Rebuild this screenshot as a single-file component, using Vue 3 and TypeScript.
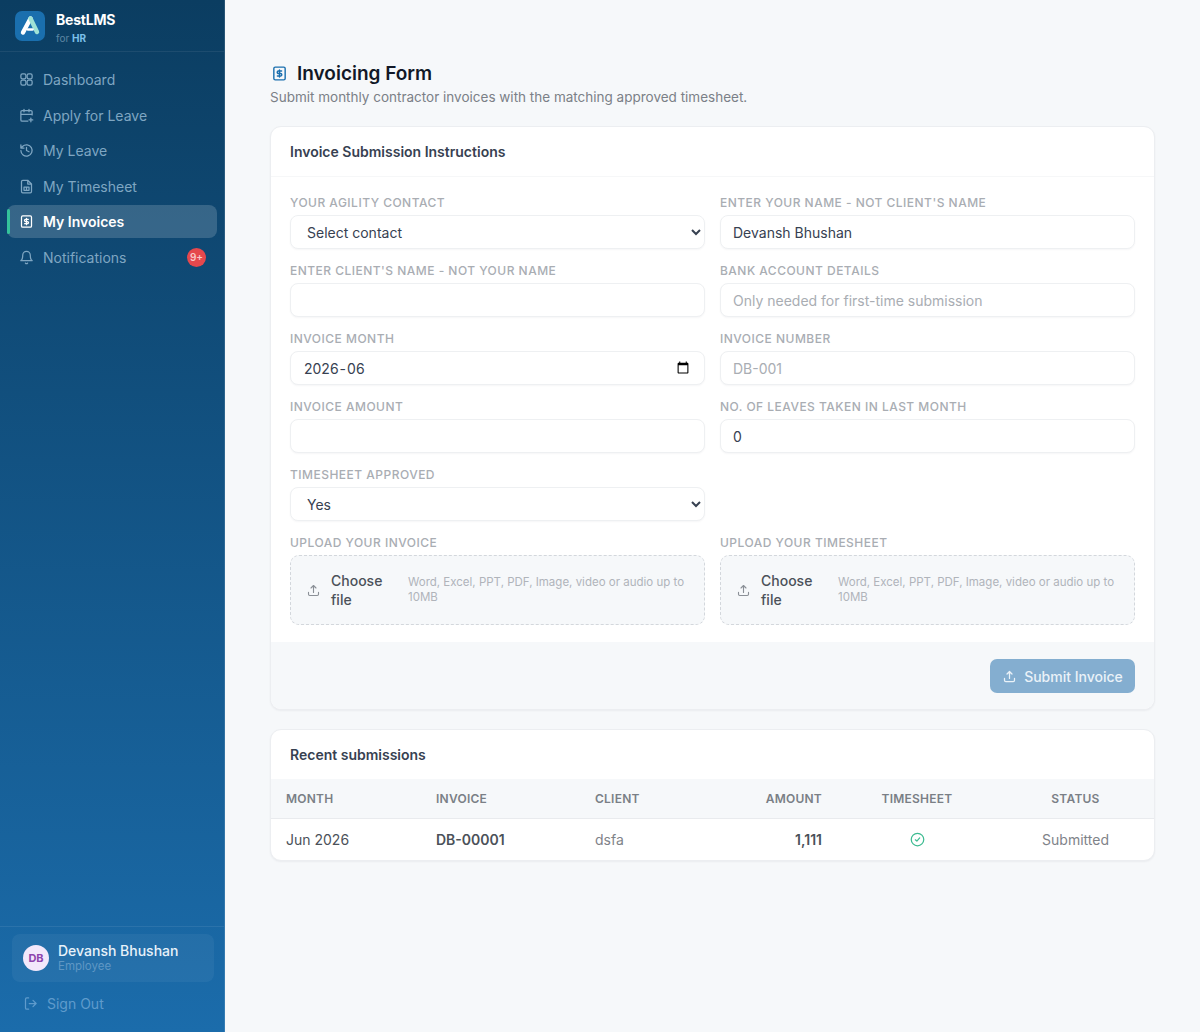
<template>
  <div class="layout">
    <aside class="sidebar">
      <div class="brand">
        <div class="logo">
          <svg viewBox="0 0 30 30" width="30" height="30">
            <path d="M15.5 7.5 8 21.5" stroke="#fff" stroke-width="4.4" stroke-linecap="round" fill="none" />
            <path d="M15.5 7.5 22 21" stroke="#9fe3d6" stroke-width="4.4" stroke-linecap="round" fill="none" />
            <path d="M13 18.5h4.5" stroke="#fff" stroke-width="2.6" stroke-linecap="round" fill="none" />
          </svg>
        </div>
        <div class="brand-text">
          <div class="brand-name">BestLMS</div>
          <div class="brand-sub">for <b>HR</b></div>
        </div>
      </div>

      <nav class="nav">
        <a v-for="item in navItems" :key="item.label" class="nav-item" :class="{ active: item.active }">
          <svg class="nav-icon" viewBox="0 0 24 24" v-html="item.icon" />
          <span>{{ item.label }}</span>
          <span v-if="item.badge" class="badge">{{ item.badge }}</span>
        </a>
      </nav>

      <div class="side-foot">
        <div class="user">
          <div class="avatar">DB</div>
          <div>
            <div class="user-name">Devansh Bhushan</div>
            <div class="user-role">Employee</div>
          </div>
        </div>
        <a class="signout">
          <svg class="nav-icon" viewBox="0 0 24 24">
            <path d="M9 21H6a2 2 0 0 1-2-2V5a2 2 0 0 1 2-2h3M16 17l5-5-5-5M21 12H10" />
          </svg>
          <span>Sign Out</span>
        </a>
      </div>
    </aside>

    <main class="main">
      <h1 class="title">
        <svg class="title-icon" viewBox="0 0 24 24">
          <rect x="4" y="3" width="16" height="18" rx="2" />
          <path d="M15 8.5H10.5a1.75 1.75 0 0 0 0 3.5h3a1.75 1.75 0 0 1 0 3.5H9M12 7v10" />
        </svg>
        Invoicing Form
      </h1>
      <p class="subtitle">Submit monthly contractor invoices with the matching approved timesheet.</p>

      <section class="card">
        <h2 class="card-head">Invoice Submission Instructions</h2>
        <div class="form">
          <label class="field">
            <span class="label">Your Agility Contact</span>
            <select class="control select"><option>Select contact</option></select>
          </label>
          <label class="field">
            <span class="label">Enter Your Name - Not Client's Name</span>
            <input class="control" value="Devansh Bhushan" />
          </label>
          <label class="field">
            <span class="label">Enter Client's Name - Not Your Name</span>
            <input class="control" />
          </label>
          <label class="field">
            <span class="label">Bank Account Details</span>
            <input class="control" placeholder="Only needed for first-time submission" />
          </label>
          <label class="field">
            <span class="label">Invoice Month</span>
            <input class="control" type="month" value="2026-06" />
          </label>
          <label class="field">
            <span class="label">Invoice Number</span>
            <input class="control" placeholder="DB-001" />
          </label>
          <label class="field">
            <span class="label">Invoice Amount</span>
            <input class="control" />
          </label>
          <label class="field">
            <span class="label">No. of Leaves Taken in Last Month</span>
            <input class="control" value="0" />
          </label>
          <label class="field">
            <span class="label">Timesheet Approved</span>
            <select class="control select"><option>Yes</option></select>
          </label>
          <div />
          <div v-for="up in uploads" :key="up" class="field upload-field">
            <span class="label">{{ up }}</span>
            <div class="drop">
              <svg class="drop-icon" viewBox="0 0 24 24">
                <path d="M4 15v3a2 2 0 0 0 2 2h12a2 2 0 0 0 2-2v-3M12 15V4M8 8l4-4 4 4" />
              </svg>
              <span class="choose">Choose file</span>
              <span class="hint">Word, Excel, PPT, PDF, Image, video or audio up to 10MB</span>
            </div>
          </div>
        </div>
        <div class="card-foot">
          <button class="submit">
            <svg viewBox="0 0 24 24">
              <path d="M4 15v3a2 2 0 0 0 2 2h12a2 2 0 0 0 2-2v-3M12 15V4M8 8l4-4 4 4" />
            </svg>
            Submit Invoice
          </button>
        </div>
      </section>

      <section class="card recent">
        <h2 class="card-head plain">Recent submissions</h2>
        <table class="table">
          <colgroup>
            <col style="width: 150px" />
            <col style="width: 159px" />
            <col />
            <col style="width: 120px" />
            <col style="width: 160px" />
            <col style="width: 157px" />
          </colgroup>
          <thead>
            <tr>
              <th>Month</th>
              <th>Invoice</th>
              <th>Client</th>
              <th class="right">Amount</th>
              <th class="center">Timesheet</th>
              <th class="center">Status</th>
            </tr>
          </thead>
          <tbody>
            <tr>
              <td class="strong">Jun 2026</td>
              <td class="strong bold">DB-00001</td>
              <td>dsfa</td>
              <td class="right strong bold">1,111</td>
              <td class="center">
                <svg class="ok" viewBox="0 0 24 24">
                  <circle cx="12" cy="12" r="10" />
                  <path d="m8.5 12.5 2.5 2 4.5-5" />
                </svg>
              </td>
              <td class="center">Submitted</td>
            </tr>
          </tbody>
        </table>
      </section>
    </main>
  </div>
</template>

<script setup lang="ts">
interface NavItem {
  label: string
  icon: string
  active?: boolean
  badge?: string
}

const navItems: NavItem[] = [
  {
    label: 'Dashboard',
    icon: '<rect x="3" y="3" width="8" height="8" rx="2.5"/><rect x="13" y="3" width="8" height="8" rx="2.5"/><rect x="3" y="13" width="8" height="8" rx="2.5"/><rect x="13" y="13" width="8" height="8" rx="2.5"/>',
  },
  {
    label: 'Apply for Leave',
    icon: '<path d="M21 11V6a2 2 0 0 0-2-2H5a2 2 0 0 0-2 2v13a2 2 0 0 0 2 2h9M8 2v4M16 2v4M3 10h18M19 16v6M16 19h6"/>',
  },
  {
    label: 'My Leave',
    icon: '<path d="M3 12a9 9 0 1 0 2.6-6.4L3 8M3 3v5h5M12 7v5l4 2"/>',
  },
  {
    label: 'My Timesheet',
    icon: '<path d="M14 2H6a2 2 0 0 0-2 2v16a2 2 0 0 0 2 2h12a2 2 0 0 0 2-2V8zM14 2v6h6M8 13h8v5H8zM12 13v5"/>',
  },
  {
    label: 'My Invoices',
    active: true,
    icon: '<rect x="4" y="3" width="16" height="18" rx="2"/><path d="M15 8.5H10.5a1.75 1.75 0 0 0 0 3.5h3a1.75 1.75 0 0 1 0 3.5H9M12 7v10"/>',
  },
  {
    label: 'Notifications',
    badge: '9+',
    icon: '<path d="M6 8a6 6 0 0 1 12 0c0 7 3 9 3 9H3s3-2 3-9M10.3 21a2 2 0 0 0 3.4 0"/>',
  },
]

const uploads = ['Upload Your Invoice', 'Upload Your Timesheet']
</script>

<style>
body {
  background: #f6f8fa;
}
</style>

<style scoped>
.layout {
  display: flex;
  min-height: 100vh;
  font-family: Inter, "Liberation Sans", sans-serif;
  color: #374151;
}

.sidebar {
  width: 225px;
  flex-shrink: 0;
  box-sizing: border-box;
  display: flex;
  flex-direction: column;
  background: linear-gradient(180deg, #0b3d61 0%, #1b6cab 100%);
  border-right: 1px solid rgba(255, 255, 255, 0.12);
}

.brand {
  height: 52px;
  box-sizing: border-box;
  padding: 11px 15px 0;
  display: flex;
  gap: 11px;
  border-bottom: 1px solid rgba(255, 255, 255, 0.07);
}

.logo {
  width: 30px;
  height: 30px;
  border-radius: 7px;
  background: #1a6fae;
}

.brand-name {
  font-size: 14px;
  font-weight: 700;
  color: #fff;
  line-height: 17px;
  margin-top: 0;
  letter-spacing: -0.2px;
}

.brand-sub {
  font-size: 10px;
  color: #5d86a3;
  line-height: 14px;
  margin-top: 3px;
}

.brand-sub b {
  color: #7cc0ea;
  font-weight: 700;
}

.nav {
  padding: 11px 7px 0;
  display: flex;
  flex-direction: column;
  gap: 2.6px;
}

.nav-item {
  position: relative;
  height: 33px;
  display: flex;
  align-items: center;
  gap: 9px;
  padding: 0 12px;
  border-radius: 8px;
  font-size: 14px;
  color: #7fa6c2;
}

.nav-item.active {
  background: rgba(255, 255, 255, 0.17);
  color: #fff;
  font-weight: 600;
}

.nav-item.active::before {
  content: '';
  position: absolute;
  left: 0;
  top: 4px;
  bottom: 4px;
  width: 3px;
  border-radius: 2px;
  background: #34c39b;
}

.nav-icon {
  width: 15px;
  height: 15px;
  flex-shrink: 0;
  margin-right: 0;
  fill: none;
  stroke: currentColor;
  stroke-width: 2;
  stroke-linecap: round;
  stroke-linejoin: round;
}

.badge {
  margin-left: auto;
  width: 19px;
  height: 19px;
  margin-right: -1px;
  border-radius: 50%;
  background: #e5484d;
  color: #f9c9c9;
  font-size: 10px;
  font-weight: 600;
  display: flex;
  align-items: center;
  justify-content: center;
}

.side-foot {
  margin-top: auto;
  height: 106px;
  box-sizing: border-box;
  padding: 7px 10px 0 12px;
  border-top: 1px solid rgba(255, 255, 255, 0.08);
}

.user {
  height: 48px;
  border-radius: 8px;
  background: rgba(255, 255, 255, 0.05);
  display: flex;
  align-items: center;
  gap: 9px;
  padding: 0 11px;
}

.avatar {
  width: 26px;
  height: 26px;
  border-radius: 50%;
  background: #f3e8fb;
  color: #8e44ad;
  font-size: 11px;
  font-weight: 700;
  display: flex;
  align-items: center;
  justify-content: center;
}

.user-name {
  font-size: 14px;
  font-weight: 500;
  color: #e8f2fa;
  line-height: 17px;
}

.user-role {
  font-size: 11.5px;
  color: #5f97c4;
  line-height: 15px;
}

.signout {
  display: flex;
  align-items: center;
  gap: 9px;
  margin: 13px 0 0 11px;
  font-size: 14px;
  line-height: 17px;
  color: #5f9bcc;
}

.main {
  flex: 1;
  min-width: 0;
  padding: 62px 45px 0;
}

.title {
  display: flex;
  align-items: center;
  gap: 9px;
  margin: 0;
  font-size: 19px;
  line-height: 23px;
  font-weight: 600;
  color: #111827;
}

.title-icon {
  width: 17px;
  height: 17px;
  margin-left: 1px;
  fill: none;
  stroke: #1a6fae;
  stroke-width: 2;
  stroke-linecap: round;
  stroke-linejoin: round;
}

.subtitle {
  margin: 2px 0 0;
  font-size: 13.5px;
  line-height: 20px;
  color: #7b8087;
}

.card {
  margin-top: 19px;
  background: #fff;
  border: 1px solid #eceef1;
  border-radius: 11px;
  box-shadow: 0 1px 2px rgba(16, 24, 40, 0.05);
  overflow: hidden;
}

.card-head {
  margin: 0;
  height: 50px;
  box-sizing: border-box;
  padding: 0 19px;
  display: flex;
  align-items: center;
  font-size: 14px;
  font-weight: 600;
  color: #374151;
  border-bottom: 1px solid #f6f7f8;
}

.card-head.plain {
  height: 49px;
  border-bottom: none;
}

.form {
  padding: 18px 19px 17px;
  display: grid;
  grid-template-columns: 1fr 1fr;
  column-gap: 15px;
  row-gap: 14px;
}

.field {
  display: flex;
  flex-direction: column;
  gap: 5px;
  min-width: 0;
}

.label {
  font-size: 12px;
  line-height: 15px;
  font-weight: 500;
  letter-spacing: 0.04em;
  text-transform: uppercase;
  color: #a9adb3;
}

.control {
  box-sizing: border-box;
  width: 100%;
  height: 34px;
  padding: 0 12px;
  border: 1px solid #eef0f2;
  border-radius: 8px;
  background: #fff;
  box-shadow: 0 1px 2px rgba(16, 24, 40, 0.04);
  font-family: inherit;
  font-size: 14px;
  color: #374151;
  outline: none;
}

.control::placeholder {
  color: #a9adb3;
}

.upload-field {
  margin-top: 0;
}

.drop {
  height: 70px;
  box-sizing: border-box;
  display: flex;
  align-items: center;
  padding: 0 15px;
  background: #f6f8fa;
  border: 1px dashed #d3d7dc;
  border-radius: 9px;
}

.drop-icon {
  width: 15px;
  height: 15px;
  flex-shrink: 0;
  fill: none;
  stroke: #8b9097;
  stroke-width: 1.8;
  stroke-linecap: round;
  stroke-linejoin: round;
}

.choose {
  width: 62px;
  flex-shrink: 0;
  margin-left: 10px;
  font-size: 14px;
  line-height: 19px;
  font-weight: 500;
  color: #4b5159;
}

.hint {
  margin-left: 15px;
  font-size: 11.5px;
  line-height: 15px;
  color: #b0b4ba;
}

.card-foot {
  height: 67px;
  box-sizing: border-box;
  padding: 17px 19px 0;
  display: flex;
  justify-content: flex-end;
  align-items: flex-start;
  background: #f6f8fa;
}

.submit {
  height: 34px;
  width: 145px;
  border: none;
  border-radius: 7px;
  background: #84aed0;
  color: #eaf2f8;
  font-family: inherit;
  font-size: 14px;
  font-weight: 500;
  display: flex;
  align-items: center;
  justify-content: center;
  gap: 7px;
}

.submit svg {
  width: 15px;
  height: 15px;
  fill: none;
  stroke: currentColor;
  stroke-width: 2;
  stroke-linecap: round;
  stroke-linejoin: round;
}

.recent {
  margin-top: 19px;
}

.table {
  width: 100%;
  table-layout: fixed;
  border-collapse: collapse;
}

.table th {
  height: 39px;
  padding: 0 15px;
  background: #f6f8fa;
  border-bottom: 1px solid #e9ebee;
  text-align: left;
  font-size: 12px;
  font-weight: 600;
  letter-spacing: 0.02em;
  text-transform: uppercase;
  color: #7a7f86;
}

.table td {
  height: 41px;
  padding: 0 15px;
  font-size: 14px;
  color: #7f8389;
}

.table .right {
  text-align: right;
}

.table .center {
  text-align: center;
}

.table td.strong {
  color: #4b5159;
}

.table td.bold {
  font-weight: 600;
}

.ok {
  display: block;
  width: 15px;
  height: 15px;
  margin: 0 auto;
  fill: none;
  stroke: #3dbb91;
  stroke-width: 2;
  stroke-linecap: round;
  stroke-linejoin: round;
}
</style>
